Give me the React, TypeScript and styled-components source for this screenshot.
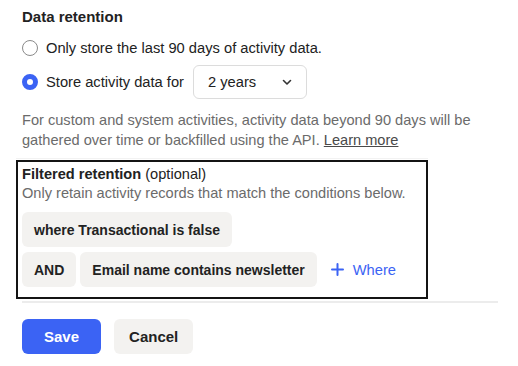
import styled, { createGlobalStyle } from "styled-components";

const GlobalStyle = createGlobalStyle`
  body {
    margin: 0;
    background: #fff;
    font-family: "Liberation Sans", Arial, sans-serif;
    color: #222;
  }
`;

const Page = styled.div`
  padding: 8px 0 0 22px;
  width: 476px;
`;

const Heading = styled.div`
  font-size: 15px;
  font-weight: 700;
  line-height: 18px;
  margin-bottom: 5px;
`;

const RadioRow = styled.label`
  display: flex;
  align-items: center;
  height: 34px;
  font-size: 14.7px;
  gap: 8px;
`;

const Radio = styled.span<{ checked?: boolean }>`
  box-sizing: border-box;
  width: 16px;
  height: 16px;
  border-radius: 50%;
  flex: none;
  border: ${(p) => (p.checked ? "5px solid #3b63f4" : "1.5px solid #8a8a8a")};
  background: #fff;
`;

const Select = styled.div`
  box-sizing: border-box;
  margin-left: 1px;
  width: 114px;
  height: 34px;
  border: 1px solid #dcdcdc;
  border-radius: 6px;
  display: flex;
  align-items: center;
  justify-content: space-between;
  padding: 0 14px;
  font-size: 14.7px;
`;

const Help = styled.p`
  margin: 12px 0 0;
  font-size: 14.6px;
  line-height: 19.5px;
  color: #6b6b6b;
`;

const Link = styled.a`
  color: #4a4a4a;
  text-decoration: underline;
`;

const Divider = styled.div<{ tone?: string; size?: number }>`
  height: ${(p) => p.size ?? 1}px;
  background: ${(p) => p.tone ?? "#f2f2f2"};
`;

const TopRule = styled(Divider)`
  margin: 8px 0 1px -6px;
  width: 412px;
`;

const FilterBox = styled.div`
  box-sizing: border-box;
  margin: 0 0 2px -6px;
  width: 412px;
  border: 2px solid #141414;
  padding: 3px 4px 10px;
`;

const FilterTitle = styled.div`
  font-size: 14.6px;
  line-height: 18px;
  b {
    font-weight: 700;
  }
`;

const FilterHint = styled.div`
  font-size: 14.6px;
  line-height: 20px;
  color: #6b6b6b;
  margin-bottom: 9px;
`;

const ChipRow = styled.div`
  display: flex;
  align-items: center;
  gap: 4px;
  & + & {
    margin-top: 5px;
  }
`;

const Chip = styled.div`
  height: 35px;
  padding: 0 12px;
  display: flex;
  align-items: center;
  background: #f3f2f0;
  border-radius: 6px;
  font-size: 14px;
  font-weight: 700;
`;

const AddWhere = styled.div`
  display: flex;
  align-items: center;
  gap: 9px;
  margin-left: 10px;
  color: #3b63f4;
  font-size: 14.7px;
`;

const Actions = styled.div`
  display: flex;
  gap: 13px;
  margin-top: 16px;
`;

const Button = styled.button<{ primary?: boolean }>`
  height: 35px;
  padding: 0 ${(p) => (p.primary ? 22 : 15)}px;
  border: none;
  border-radius: 6px;
  font-family: inherit;
  font-size: 15px;
  font-weight: 700;
  background: ${(p) => (p.primary ? "#3b63f4" : "#f3f2f0")};
  color: ${(p) => (p.primary ? "#fff" : "#222")};
`;

const Chevron = () => (
  <svg width="10" height="7" viewBox="0 0 10 7" fill="none">
    <path d="M1.5 1.5L5 5L8.5 1.5" stroke="#333" strokeWidth="1.6" strokeLinecap="round" strokeLinejoin="round" />
  </svg>
);

const Plus = () => (
  <svg width="13" height="13" viewBox="0 0 13 13" fill="none">
    <path d="M6.5 1V12M1 6.5H12" stroke="#3b63f4" strokeWidth="2" strokeLinecap="round" />
  </svg>
);

export default function App() {
  return (
    <Page>
      <GlobalStyle />
      <Heading>Data retention</Heading>
      <RadioRow>
        <Radio />
        Only store the last 90 days of activity data.
      </RadioRow>
      <RadioRow>
        <Radio checked />
        Store activity data for
        <Select>
          2 years
          <Chevron />
        </Select>
      </RadioRow>
      <Help>
        For custom and system activities, activity data beyond 90 days will be gathered over time or backfilled
        using the API. <Link>Learn more</Link>
      </Help>
      <TopRule />
      <FilterBox>
        <FilterTitle>
          <b>Filtered retention</b> (optional)
        </FilterTitle>
        <FilterHint>Only retain activity records that match the conditions below.</FilterHint>
        <ChipRow>
          <Chip>where Transactional is false</Chip>
        </ChipRow>
        <ChipRow>
          <Chip>AND</Chip>
          <Chip>Email name contains newsletter</Chip>
          <AddWhere>
            <Plus />
            Where
          </AddWhere>
        </ChipRow>
      </FilterBox>
      <Divider tone="#ececec" size={2} />
      <Actions>
        <Button primary>Save</Button>
        <Button>Cancel</Button>
      </Actions>
    </Page>
  );
}
